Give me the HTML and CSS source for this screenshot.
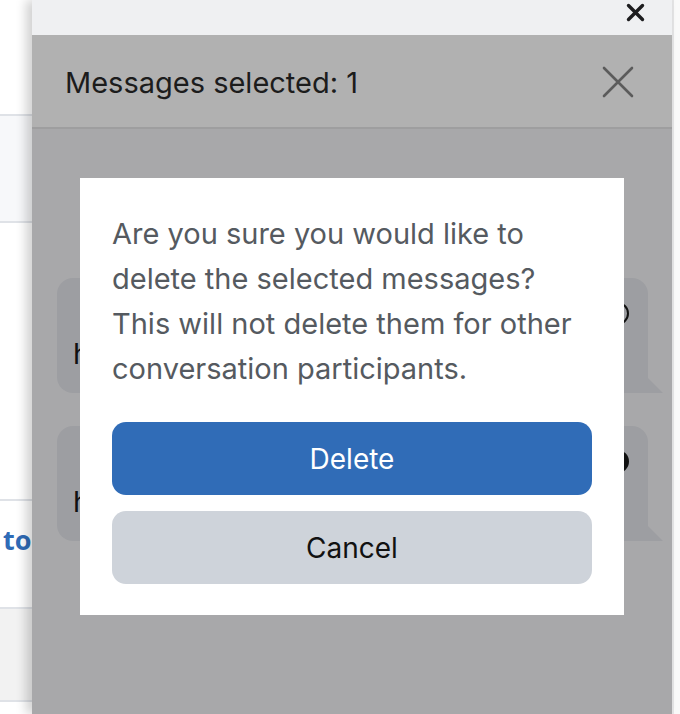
FILE: index.html
```html
<!DOCTYPE html>
<html>
<head>
    <meta charset='utf-8'>
    <title>Messages</title>
    <meta name='viewport' content='width=device-width, initial-scale=1'>
    <link rel="stylesheet" href="styles.css">
</head>
<body>
    <div class="page">
        <div class="page-row page-gap"></div>
        <div class="page-row page-tinted"></div>
        <div class="page-row page-plain"></div>
        <div class="page-row page-link"><span>to</span></div>
        <div class="page-row page-grey"></div>
        <div class="page-row page-rest"></div>
    </div>

    <div class="drawer">
        <div class="drawer-top">
            <button class="close-drawer" aria-label="Close">
                <svg width="19" height="19" viewBox="0 0 19 19"><path d="M2.5 2.5 L16.5 16.5 M16.5 2.5 L2.5 16.5" stroke="#1d1d1f" stroke-width="3.4" stroke-linecap="round"/></svg>
            </button>
        </div>
        <div class="drawer-header">
            <span class="selected-count">Messages selected: 1</span>
            <button class="cancel-select" aria-label="Cancel selection">
                <svg width="32" height="32" viewBox="0 0 32 32"><path d="M2 2 L30 30 M30 2 L2 30" stroke="#5b5b5b" stroke-width="2.6" stroke-linecap="round"/></svg>
            </button>
        </div>
        <div class="drawer-body">
            <div class="bubble">
                <span class="bubble-text">hi</span>
                <span class="tick"></span>
            </div>
            <div class="bubble">
                <span class="bubble-text">hi</span>
                <span class="tick tick-on"></span>
            </div>

            <div class="modal">
                <p>Are you sure you would like to delete the selected messages? This will not delete them for other conversation participants.</p>
                <button class="btn btn-primary">Delete</button>
                <button class="btn btn-secondary">Cancel</button>
            </div>
        </div>
    </div>

    <div class="edge"></div>
</body>
</html>
```

FILE: styles.css
```css
* {
    margin: 0;
    padding: 0;
    box-sizing: border-box;
}

body {
    font-family: Inter, Roboto, "Liberation Sans", sans-serif;
    display: flex;
    width: 680px;
    height: 714px;
    overflow: hidden;
    background: #fff;
}

/* page behind the drawer */
.page {
    width: 32px;
    flex-shrink: 0;
    overflow: hidden;
    background: #fff;
}

.page-row {
    border-bottom: 2px solid #dfe2e7;
}

.page-gap {
    height: 116px;
}

.page-tinted {
    height: 107px;
    background: #f7f8fa;
}

.page-plain {
    height: 278px;
}

.page-link {
    height: 108px;
    padding: 20px 0 0 3px;
}

.page-link span {
    font-family: "Open Sans", sans-serif;
    font-weight: 700;
    font-size: 27px;
    color: #2f6bb6;
}

.page-grey {
    height: 93px;
    background: #f2f2f2;
}

.page-rest {
    border: none;
}

/* drawer */
.drawer {
    width: 640px;
    flex-shrink: 0;
    display: flex;
    flex-direction: column;
    box-shadow: -6px 0 10px rgba(0, 0, 0, 0.18);
    position: relative;
}

.drawer-top {
    height: 35px;
    background: #eff0f2;
    display: flex;
    justify-content: flex-end;
    padding: 3px 27px 0 0;
}

button {
    border: none;
    background: none;
    font-family: inherit;
    cursor: pointer;
}

.close-drawer {
    width: 19px;
    height: 19px;
}

.drawer-header {
    height: 94px;
    background: #b1b1b1;
    border-bottom: 2px solid #9e9e9f;
    display: flex;
    align-items: center;
    justify-content: space-between;
    padding: 2px 38px 0 33px;
}

.selected-count {
    font-size: 29px;
    color: #1c1c1c;
}

.cancel-select {
    width: 32px;
    height: 32px;
}

.drawer-body {
    flex: 1;
    background: #a8a8aa;
    position: relative;
    padding: 149px 9px 0 25px;
    display: flex;
    flex-direction: column;
    gap: 33px;
}

.bubble {
    position: relative;
    width: 591px;
    height: 115px;
    background: #9d9ea2;
    border-radius: 16px 16px 0 16px;
    padding: 58px 16px 0 16px;
    display: flex;
    justify-content: space-between;
    align-items: flex-start;
}

.bubble::after {
    content: "";
    position: absolute;
    right: -15px;
    bottom: 0;
    border-left: 15px solid #9d9ea2;
    border-top: 15px solid transparent;
}

.bubble-text {
    font-size: 29px;
    color: #111;
    white-space: nowrap;
}

.tick {
    position: absolute;
    right: 19px;
    top: 24px;
    width: 23px;
    height: 23px;
    border: 2px solid #111;
    border-radius: 50%;
}

.tick-on {
    background: #111;
}

/* confirmation dialog */
.modal {
    position: absolute;
    left: 48px;
    top: 49px;
    width: 544px;
    height: 437px;
    background: #fff;
    padding: 33px 32px 0 32px;
    display: flex;
    flex-direction: column;
    gap: 16px;
}

.modal p {
    font-size: 29px;
    line-height: 45px;
    color: #555a60;
    margin-bottom: 15px;
}

.btn {
    height: 73px;
    border-radius: 14px;
    font-size: 28px;
}

.btn-primary {
    background: #306cb7;
    color: #fff;
}

.btn-secondary {
    background: #ced3da;
    color: #111;
}

.edge {
    width: 8px;
    flex-shrink: 0;
    border-left: 2px solid #e4e4e5;
    background: #f9f9f9;
}
```
